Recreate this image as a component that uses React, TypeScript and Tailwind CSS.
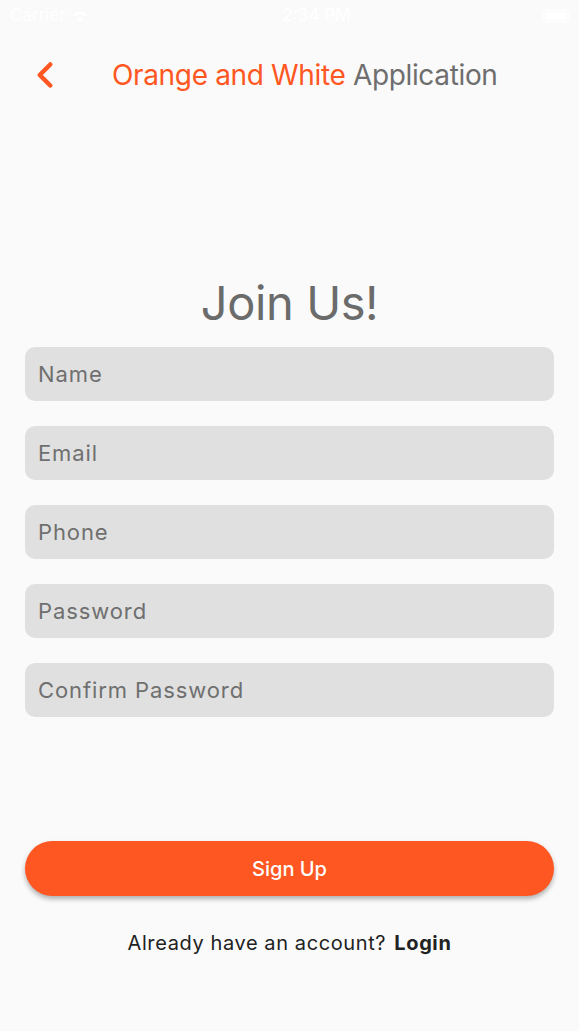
import { ChevronLeft } from "lucide-react";

const fields = ["Name", "Email", "Phone", "Password", "Confirm Password"];

export default function App() {
  return (
    <div className="w-[579px] h-[1031px] bg-[#fafafa] flex flex-col font-['Inter',sans-serif] overflow-hidden">
      {/* Status bar */}
      <div className="h-[32px] flex items-center justify-between px-[10px] text-white text-[17px]">
        <div className="flex items-center gap-1">
          <span>Carrier</span>
          <svg width="20" height="14" viewBox="0 0 20 14" fill="white">
            <path d="M10 13l3-3.5a4.5 4.5 0 00-6 0z M10 5a8 8 0 015.5 2.2l1.5-1.8A10.5 10.5 0 003 5.4l1.5 1.8A8 8 0 0110 5z" />
          </svg>
        </div>
        <span className="font-medium">2:34 PM</span>
        <div className="w-[26px] h-[12px] border border-white rounded-[3px] p-[1px]">
          <div className="w-full h-full bg-white rounded-[1px]" />
        </div>
      </div>

      {/* Header */}
      <div className="h-[85px] flex items-center relative">
        <ChevronLeft className="absolute left-[24px] text-[#ff5722]" size={42} strokeWidth={2.6} />
        <h1 className="ml-[112px] text-[28px] tracking-[-0.35px]">
          <span className="text-[#ff5722]">Orange and White</span>{" "}
          <span className="text-[#6e6e6e]">Application</span>
        </h1>
      </div>

      {/* Form */}
      <div className="flex flex-col items-center mt-[162px] px-[25px]">
        <h2 className="text-[47px] text-[#6b6b6b] leading-none tracking-[-0.4px]">Join Us!</h2>
        <div className="w-full flex flex-col gap-[25px] mt-[21px]">
          {fields.map((f) => (
            <div
              key={f}
              className="h-[54px] rounded-[10px] bg-[#e0e0e0] flex items-center pl-[13px] text-[22px] text-[#6f6f6f] tracking-[0.9px]"
            >
              {f}
            </div>
          ))}
        </div>

        <button className="w-full h-[55px] mt-[124px] rounded-full bg-[#ff5722] text-white text-[20px] font-medium shadow-[0_3px_5px_rgba(0,0,0,0.3)]">
          Sign Up
        </button>

        <p className="mt-[32px] text-[20px] text-[#222] tracking-[0.6px]">
          Already have an account? <span className="font-bold ml-[2px]">Login</span>
        </p>
      </div>
    </div>
  );
}
